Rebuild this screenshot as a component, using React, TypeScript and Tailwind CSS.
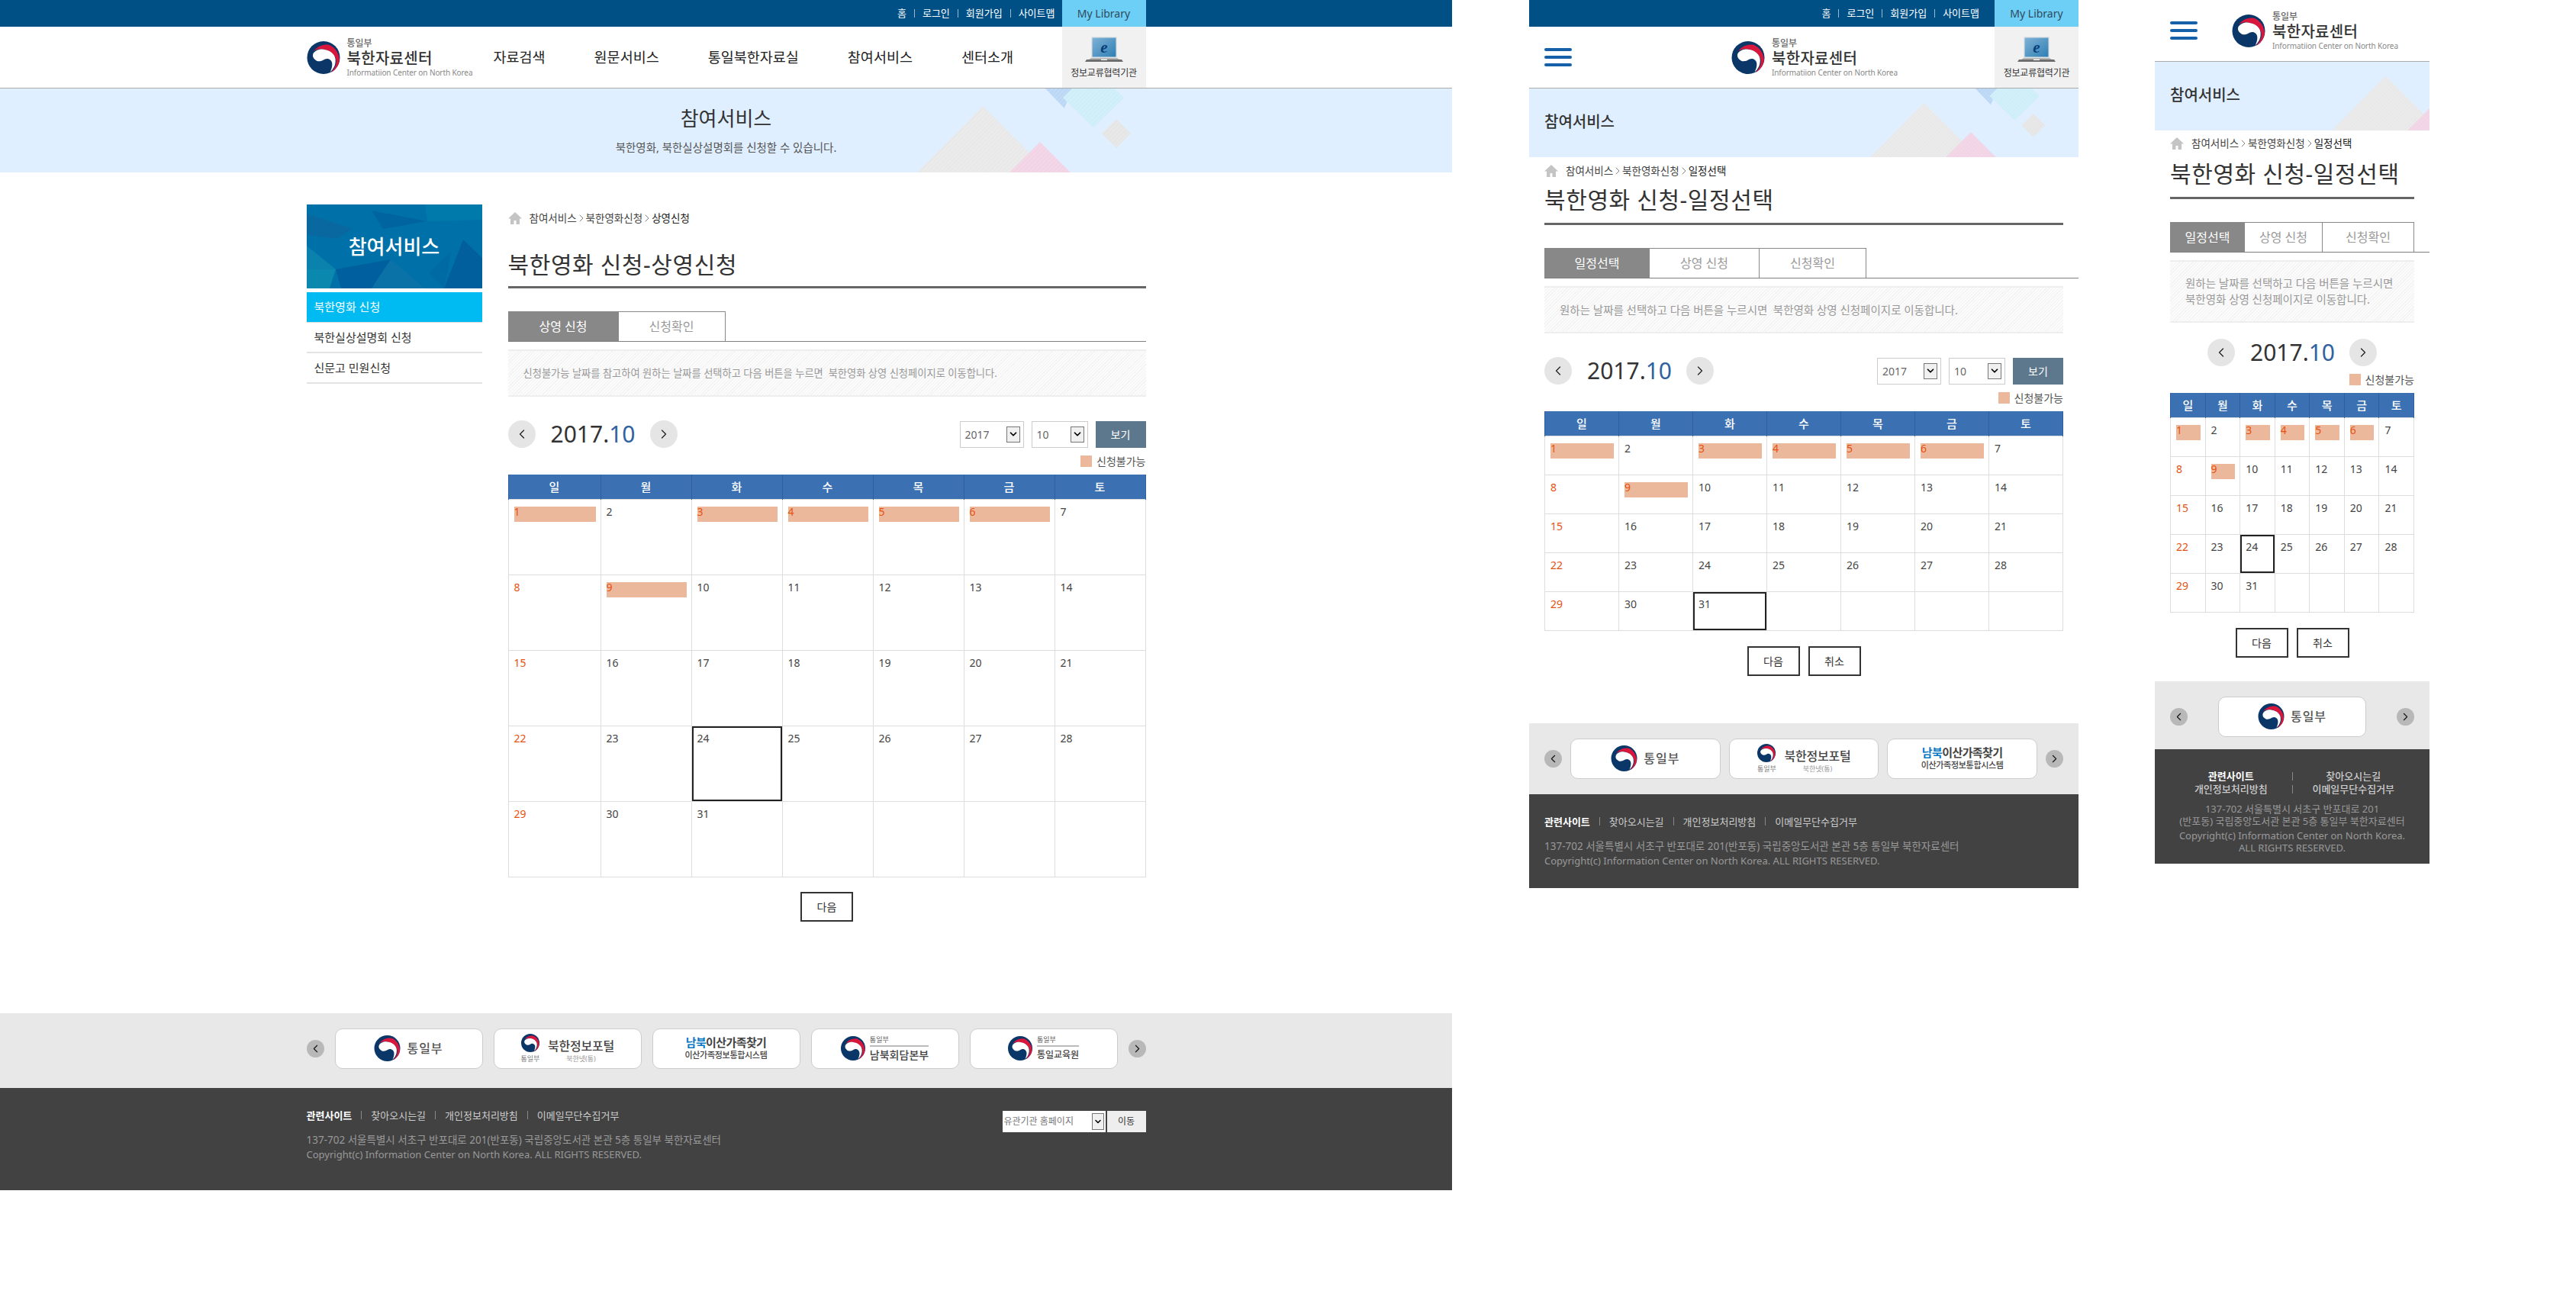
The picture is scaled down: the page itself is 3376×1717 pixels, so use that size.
import React from "react";
import { ChevronDown, ChevronLeft, ChevronRight } from "lucide-react";

const Taegeuk: React.FC<{ className?: string }> = ({ className }) => (
  <svg viewBox="0 0 44 44" className={className}>
    <circle cx="22" cy="22" r="22" fill="#0b3768" />
    <path d="M8 15C12 7 22 3 30 5C40 9 46 22 42 31C40 36 36 40 32 42C38 36 41 28 38 22C34 13 22 9 14 11C11 12 9 13 8 15Z" fill="#d9173d" />
    <path d="M8 17C10 13 16 10 22 11C32 12 39 19 38 27C38 32 35 38 31 41C34 35 35 28 31 25C27 22 24 24 22 25C19 27 14 28 11 25C8 23 7 20 8 17Z" fill="#fff" />
  </svg>
);

const Logo: React.FC = () => (
  <div className="flex items-center gap-[9px] shrink-0">
    <Taegeuk className="w-[44px] h-[43px]" />
    <div className="flex flex-col w-[137px] mt-[2px]">
      <span className="text-[12px] leading-[14px] text-[#666] font-medium">통일부</span>
      <span className="text-[20px] leading-[25px] text-[#333] font-medium tracking-[0.3px]">북한자료센터</span>
      <span className="text-[10px] leading-[13px] text-[#888] whitespace-nowrap tracking-[-0.1px]">Informatiion Center on North Korea</span>
    </div>
  </div>
);

const TopBar: React.FC<{ gapClass: string }> = ({ gapClass }) => (
  <div className="h-[35px] flex justify-end items-center text-white text-[13px]">
    {["홈", "로그인", "회원가입", "사이트맵"].map((t, i) => (
      <React.Fragment key={t}>
        {i > 0 && <span className="w-px h-[11px] bg-[#9db9cf] mx-[10px]" />}
        <span>{t}</span>
      </React.Fragment>
    ))}
    <span className={`${gapClass} w-[110px] h-[35px] flex items-center justify-center bg-[#6dcff6] text-[#2f4a5c] text-[14px]`}>My Library</span>
  </div>
);

const LaptopBox: React.FC = () => (
  <div className="w-[110px] h-[80px] bg-[#f1f1f1] flex flex-col items-center shrink-0">
    <svg viewBox="0 0 50 36" className="w-[50px] h-[36px] mt-[13px]">
      <defs>
        <linearGradient id="lapScreen" x1="0" y1="0" x2="1" y2="1">
          <stop offset="0" stopColor="#7fb2d6" />
          <stop offset="1" stopColor="#2f7fb4" />
        </linearGradient>
      </defs>
      <rect x="8" y="0" width="34" height="28" rx="1" fill="#dfe3e6" />
      <rect x="9.5" y="1.5" width="31" height="25" fill="url(#lapScreen)" />
      <path d="M2 30H48L50 33H0Z" fill="#6e6e6e" />
      <path d="M8 28H42L45 30H5Z" fill="#b5b5b5" />
      <rect x="21" y="29.5" width="8" height="1.5" fill="#eee" />
      <text x="25" y="21" textAnchor="middle" fontSize="21" fontStyle="italic" fontWeight="700" fill="#0b3f78" fontFamily="'Liberation Serif', serif">e</text>
    </svg>
    <span className="text-[12px] leading-[14px] mt-[5px] text-[#333] whitespace-nowrap tracking-[-0.2px]">정보교류협력기관</span>
  </div>
);

const Hamburger: React.FC = () => (
  <div className="w-[36px] flex flex-col gap-[6px] shrink-0">
    <span className="h-[4px] rounded-full bg-[#1560a8]" />
    <span className="h-[4px] rounded-full bg-[#1560a8]" />
    <span className="h-[4px] rounded-full bg-[#1560a8]" />
  </div>
);

const BandShapes: React.FC<{ className: string }> = ({ className }) => (
  <svg viewBox="0 0 360 110" className={`absolute top-0 ${className}`}>
    <defs>
      <pattern id="bandHatch" width="4" height="4" patternUnits="userSpaceOnUse" patternTransform="rotate(45)">
        <rect width="2" height="4" fill="#fff" fillOpacity="0.12" />
      </pattern>
    </defs>
    {[
      { d: "M108 23L195 110H22Z", f: "#e8e8e8" },
      { d: "M183 70L223 110H143Z", f: "#f1d3e5" },
      { d: "M190 0H225L215 26Z", f: "#b9d6f5" },
      { d: "M213 12L225 0H280L293 12L253 51Z", f: "#cdeef8" },
      { d: "M283 40L302 59L283 78L264 59Z", f: "#e5e5e5" },
    ].map((s) => (
      <g key={s.d}>
        <path d={s.d} fill={s.f} />
        <path d={s.d} fill="url(#bandHatch)" />
      </g>
    ))}
  </svg>
);

const Crumbs: React.FC<{ last: string; className: string }> = ({ last, className }) => (
  <div className={`flex items-center h-[20px] text-[13.5px] text-[#444] ${className}`}>
    <svg viewBox="0 0 18 16" className="w-[18px] h-[16px] mr-[10px] shrink-0">
      <path d="M9 0L18 8.5H15V16H10.5V11H7.5V16H3V8.5H0Z" fill="#c4c4c4" />
    </svg>
    <span>참여서비스</span>
    <ChevronRight size={16} strokeWidth={1} className="mx-[-2px]" />
    <span>북한영화신청</span>
    <ChevronRight size={16} strokeWidth={1} className="mx-[-2px]" />
    <span className="text-[#222]">{last}</span>
  </div>
);

const FakeSelect: React.FC<{ value: string; className: string }> = ({ value, className }) => (
  <div className={`h-[35px] border border-[#ccc] bg-white flex items-center justify-between pl-[6px] pr-[4px] text-[14px] text-[#666] ${className}`}>
    <span>{value}</span>
    <span className="w-[18px] h-[21px] bg-[#f0f0f0] border border-[#777] flex items-center justify-center">
      <ChevronDown size={14} strokeWidth={3} className="text-black" />
    </span>
  </div>
);

const blocked = [1, 3, 4, 5, 6, 9];
const weeks: (number | null)[][] = [
  [1, 2, 3, 4, 5, 6, 7],
  [8, 9, 10, 11, 12, 13, 14],
  [15, 16, 17, 18, 19, 20, 21],
  [22, 23, 24, 25, 26, 27, 28],
  [29, 30, 31, null, null, null, null],
];

const Calendar: React.FC<{ selected: number; rowClass: string; firstClass?: string }> = ({ selected, rowClass, firstClass }) => (
  <table className="w-full table-fixed mt-[10px]">
    <thead>
      <tr className="h-[32px] bg-[#3b70b2] text-white text-[15px]">
        {["일", "월", "화", "수", "목", "금", "토"].map((d, i) => (
          <th key={d} className={`font-medium border-x border-[#2f5f9e] ${i === 0 ? firstClass ?? "" : ""}`}>{d}</th>
        ))}
      </tr>
    </thead>
    <tbody>
      {weeks.map((w, i) => (
        <tr key={i} className={rowClass}>
          {w.map((d, j) => (
            <td
              key={j}
              className={`align-top border border-[#ddd] text-[14px] ${d === selected ? "shadow-[inset_0_0_0_2px_#222]" : ""}`}
            >
              {d !== null && (
                <div
                  className={`mt-[9px] ml-[7px] mr-[6px] h-[20px] leading-[14px] ${blocked.includes(d) ? "bg-[#ecb89b]" : ""} ${j === 0 || blocked.includes(d) ? "text-[#e8500f]" : "text-[#444]"}`}
                >
                  {d}
                </div>
              )}
            </td>
          ))}
        </tr>
      ))}
    </tbody>
  </table>
);

const OutlineBtn: React.FC<{ label: string }> = ({ label }) => (
  <span className="w-[69px] h-[39px] border-2 border-[#333] bg-white flex items-center justify-center text-[14px] text-[#333]">{label}</span>
);

const Tabs: React.FC<{ items: { label: string; w: string }[]; className: string }> = ({ items, className }) => (
  <div className={`flex border-b border-[#808080] ${className}`}>
    {items.map((t, i) => (
      <div
        key={t.label}
        className={`${t.w} h-full flex items-center justify-center text-[16px] ${i === 0 ? "bg-[#888] text-white" : "border-t border-r border-[#888] text-[#999]"}`}
      >
        {t.label}
      </div>
    ))}
  </div>
);

const Notice: React.FC<{ text: string; className: string }> = ({ text, className }) => (
  <div className={`mt-[10px] flex items-center px-[20px] border-y-2 border-[#eee] leading-[21px] text-[#999] bg-[repeating-linear-gradient(135deg,#f3f3f3_0px,#f3f3f3_1px,#fbfbfb_1px,#fbfbfb_3px)] ${className}`}>
    <p className="whitespace-pre-wrap break-keep">{text}</p>
  </div>
);

const YearNav: React.FC = () => (
  <div className="flex items-center gap-[20px]">
    <span className="w-[36px] h-[36px] rounded-full bg-[#e5e5e5] flex items-center justify-center">
      <ChevronLeft size={20} strokeWidth={1.5} className="text-[#222]" />
    </span>
    <span className="text-[30px] leading-[36px] text-[#333] w-[110px] whitespace-nowrap">
      2017.<span className="text-[#2f629f]">10</span>
    </span>
    <span className="w-[36px] h-[36px] rounded-full bg-[#e5e5e5] flex items-center justify-center">
      <ChevronRight size={20} strokeWidth={1.5} className="text-[#222]" />
    </span>
  </div>
);

const YearControls: React.FC = () => (
  <div className="flex items-center justify-between h-[36px] mt-[31px]">
    <YearNav />
    <div className="flex items-center gap-[10px]">
      <FakeSelect value="2017" className="w-[84px]" />
      <FakeSelect value="10" className="w-[74px]" />
      <span className="w-[66px] h-[35px] bg-[#5d778d] text-white text-[14px] flex items-center justify-center">보기</span>
    </div>
  </div>
);

const Legend: React.FC = () => (
  <div className="flex items-center justify-end gap-[6px] h-[15px] mt-[10px] text-[14px] text-[#555]">
    <span className="w-[15px] h-[15px] bg-[#ecb89b]" />
    <span>신청불가능</span>
  </div>
);

const CardLogo: React.FC<{ kind: number }> = ({ kind }) => {
  if (kind === 0)
    return (
      <div className="flex items-center gap-[8px]">
        <Taegeuk className="w-[35px] h-[34px]" />
        <span className="text-[16px] font-medium text-[#555] tracking-[1px]">통일부</span>
      </div>
    );
  if (kind === 1)
    return (
      <div className="flex items-start gap-[10px]">
        <div className="flex flex-col items-center">
          <Taegeuk className="w-[26px] h-[24px]" />
          <span className="text-[9px] leading-[12px] mt-[3px] text-[#777]">통일부</span>
        </div>
        <div className="flex flex-col items-center">
          <span className="text-[16px] leading-[22px] mt-[5px] font-medium text-[#444] tracking-[-0.2px] whitespace-nowrap">북한정보포털</span>
          <span className="text-[9px] leading-[12px] text-[#999]">북한넷(통)</span>
        </div>
      </div>
    );
  if (kind === 2)
    return (
      <div className="flex flex-col items-center">
        <span className="text-[15px] leading-[18px] font-bold text-[#444] whitespace-nowrap tracking-[-0.6px]">
          <span className="text-[#0a78c2]">남북</span>이산가족찾기
        </span>
        <span className="text-[11px] leading-[16px] font-medium text-[#444] whitespace-nowrap tracking-[-0.3px]">이산가족정보통합시스템</span>
      </div>
    );
  return (
    <div className="flex items-center gap-[6px]">
      <Taegeuk className="w-[32px] h-[34px]" />
      <div className="flex flex-col">
        <span className="text-[9px] leading-[11px] text-[#555]">통일부</span>
        <span className="h-[2px] bg-[#bbb] mt-[2px] mb-[2px]" />
        <span className={`font-medium text-[#444] whitespace-nowrap leading-[18px] ${kind === 3 ? "text-[14px]" : "text-[12px]"}`}>
          {kind === 3 ? "남북회담본부" : "통일교육원"}
        </span>
      </div>
    </div>
  );
};

const ArrowDot: React.FC<{ dir: "l" | "r" }> = ({ dir }) => (
  <span className="w-[23px] h-[23px] rounded-full bg-[#b8b8b8] flex items-center justify-center shrink-0">
    {dir === "l" ? <ChevronLeft size={17} strokeWidth={1.5} className="text-[#111]" /> : <ChevronRight size={17} strokeWidth={1.5} className="text-[#111]" />}
  </span>
);

const LogoBand: React.FC<{ kinds: number[]; className: string; innerClass: string; cardClass: string }> = ({ kinds, className, innerClass, cardClass }) => (
  <div className={`bg-[#e8e8e8] pt-[20px] ${className}`}>
    <div className={`flex items-center h-[53px] ${innerClass}`}>
      <ArrowDot dir="l" />
      {kinds.map((k) => (
        <div key={k} className={`h-[53px] bg-white border border-[#ccc] rounded-[10px] flex items-center justify-center ${cardClass}`}>
          <CardLogo kind={k} />
        </div>
      ))}
      <ArrowDot dir="r" />
    </div>
  </div>
);

const FootLinks: React.FC = () => (
  <div className="flex items-center text-[13px] leading-[18px] text-[#ccc]">
    <span className="text-white font-bold">관련사이트</span>
    {["찾아오시는길", "개인정보처리방침", "이메일무단수집거부"].map((t) => (
      <React.Fragment key={t}>
        <span className="w-px h-[11px] bg-[#888] mx-[12px]" />
        <span>{t}</span>
      </React.Fragment>
    ))}
  </div>
);

const Address: React.FC = () => (
  <div className="mt-[14px] leading-[19px] text-[#999]">
    <p className="text-[13.5px]">137-702 서울특별시 서초구 반포대로 201(반포동) 국립중앙도서관 본관 5층 통일부 북한자료센터</p>
    <p className="text-[13px]">Copyright(c) Information Center on North Korea. ALL RIGHTS RESERVED.</p>
  </div>
);

const DesktopPage: React.FC = () => (
  <div className="w-[1903px] shrink-0">
    <div className="bg-[#005086]">
      <div className="w-[1100px] mx-auto">
        <TopBar gapClass="ml-[9px]" />
      </div>
    </div>
    <div className="h-[81px] border-b border-[#aaa]">
      <div className="w-[1100px] mx-auto flex items-center h-[80px]">
        <Logo />
        <nav className="ml-[55px] flex gap-[64px] text-[18.5px] text-[#222] whitespace-nowrap">
          {["자료검색", "원문서비스", "통일북한자료실", "참여서비스", "센터소개"].map((t) => (
            <span key={t}>{t}</span>
          ))}
        </nav>
        <div className="ml-auto">
          <LaptopBox />
        </div>
      </div>
    </div>
    <div className="relative h-[110px] bg-[#dfefff] overflow-hidden flex flex-col items-center">
      <BandShapes className="left-[1180px] w-[360px] h-[110px]" />
      <h2 className="relative mt-[21px] text-[26px] leading-[36px] text-[#333]">참여서비스</h2>
      <p className="relative mt-[10px] text-[14.5px] leading-[20px] text-[#555]">북한영화, 북한실상설명회를 신청할 수 있습니다.</p>
    </div>

    <div className="w-[1100px] mx-auto flex gap-[34px] mt-[42px]">
      <aside className="w-[230px] shrink-0">
        <div className="relative h-[110px] bg-[#0071a8] overflow-hidden flex items-center justify-center">
          <svg viewBox="0 0 230 110" className="absolute inset-0 w-full h-full">
            <path d="M0 12L60 32L40 45L0 40Z" fill="#0a68a0" />
            <path d="M85 8L158 22L100 32Z" fill="#0064a0" />
            <path d="M155 0H230V20L158 22Z" fill="#0079ab" />
            <path d="M0 54L38 85L0 90Z" fill="#0a82ad" />
            <path d="M38 85L110 72L85 110H45Z" fill="#005f9e" />
            <path d="M0 85L38 85L30 110H0Z" fill="#0a88ad" />
            <path d="M110 72L155 110H85Z" fill="#0a72a6" />
            <path d="M205 46L230 70V110H180Z" fill="#005f9c" />
            <path d="M205 46L190 60L180 110L160 90Z" fill="#006aa3" />
          </svg>
          <span className="relative text-[26px] text-white font-medium">참여서비스</span>
        </div>
        <ul className="mt-[5px]">
          <li className="h-[40px] flex items-center pl-[10px] bg-[#00bbf2] border-b border-[#ddd] text-[15px] text-white">북한영화 신청</li>
          <li className="h-[40px] flex items-center pl-[10px] border-b-2 border-[#e3e3e3] text-[15px] text-[#333]">북한실상설명회 신청</li>
          <li className="h-[40px] flex items-center pl-[10px] border-b-2 border-[#e3e3e3] text-[15px] text-[#333]">신문고 민원신청</li>
        </ul>
      </aside>
      <main className="flex-1 min-w-0">
        <Crumbs last="상영신청" className="mt-[8px]" />
        <h1 className="mt-[31px] h-[51px] border-b-[3px] border-[#666] text-[30px] leading-[40px] text-[#333] tracking-[0.6px]">북한영화 신청-상영신청</h1>
        <Tabs
          className="mt-[30px] h-[40px]"
          items={[
            { label: "상영 신청", w: "w-[145px]" },
            { label: "신청확인", w: "w-[140px]" },
          ]}
        />
        <Notice className="h-[62px] text-[13.25px]" text="신청불가능 날짜를 참고하여 원하는 날짜를 선택하고 다음 버튼을 누르면  북한영화 상영 신청페이지로 이동합니다." />
        <YearControls />
        <Legend />
        <Calendar selected={24} rowClass="h-[99px]" firstClass="w-[121px]" />
        <div className="flex justify-center mt-[19px]">
          <OutlineBtn label="다음" />
        </div>
      </main>
    </div>

    <LogoBand kinds={[0, 1, 2, 3, 4]} className="h-[98px] mt-[120px]" innerClass="w-[1100px] mx-auto gap-[14px]" cardClass="flex-1" />
    <div className="h-[134px] bg-[#424242] pt-[27px]">
      <div className="w-[1100px] mx-auto flex justify-between items-start">
        <div>
          <FootLinks />
          <Address />
        </div>
        <div className="flex gap-[2px] mt-[3px]">
          <div className="w-[135px] h-[28px] bg-white flex items-center justify-between pl-[2px] pr-[2px] text-[12px] text-[#777]">
            <span className="whitespace-nowrap">유관기관 홈페이지</span>
            <span className="w-[16px] h-[22px] bg-[#f0f0f0] border border-[#777] flex items-center justify-center shrink-0">
              <ChevronDown size={12} strokeWidth={3} className="text-black" />
            </span>
          </div>
          <span className="w-[51px] h-[28px] bg-[#eee] text-[12px] text-[#333] flex items-center justify-center">이동</span>
        </div>
      </div>
    </div>
  </div>
);

const TabletPage: React.FC = () => (
  <div className="w-[720px] shrink-0 ml-[101px]">
    <div className="bg-[#005086]">
      <TopBar gapClass="ml-[20px]" />
    </div>
    <div className="h-[81px] border-b border-[#aaa] flex items-center pl-[20px]">
      <Hamburger />
      <div className="ml-[209px]">
        <Logo />
      </div>
      <div className="ml-auto">
        <LaptopBox />
      </div>
    </div>
    <div className="relative h-[90px] bg-[#dfefff] overflow-hidden flex items-center pl-[20px]">
      <BandShapes className="left-[429px] w-[295px] h-[90px]" />
      <h2 className="relative -mt-[2px] text-[20px] text-[#333] font-medium">참여서비스</h2>
    </div>
    <div className="px-[20px]">
      <Crumbs last="일정선택" className="mt-[8px]" />
      <h1 className="mt-[8px] h-[53px] border-b-[3px] border-[#666] text-[30px] leading-[40px] text-[#333] tracking-[0.6px]">북한영화 신청-일정선택</h1>
      <Tabs
        className="mt-[30px] h-[40px] -mr-[20px]"
        items={[
          { label: "일정선택", w: "w-[138px]" },
          { label: "상영 신청", w: "w-[144px]" },
          { label: "신청확인", w: "w-[140px]" },
        ]}
      />
      <Notice className="h-[62px] text-[14.5px]" text="원하는 날짜를 선택하고 다음 버튼을 누르시면  북한영화 상영 신청페이지로 이동합니다." />
      <YearControls />
      <Legend />
      <Calendar selected={31} rowClass="h-[51px]" />
      <div className="flex justify-center gap-[11px] mt-[20px]">
        <OutlineBtn label="다음" />
        <OutlineBtn label="취소" />
      </div>
    </div>
    <LogoBand kinds={[0, 1, 2]} className="h-[93px] mt-[62px]" innerClass="mx-[20px] gap-[11px]" cardClass="flex-1" />
    <div className="h-[123px] bg-[#424242] pt-[27px] px-[20px]">
      <FootLinks />
      <Address />
    </div>
  </div>
);

const MobilePage: React.FC = () => (
  <div className="w-[360px] shrink-0 ml-[100px]">
    <div className="h-[81px] border-b border-[#aaa] flex items-center pl-[20px]">
      <Hamburger />
      <div className="ml-[45px]">
        <Logo />
      </div>
    </div>
    <div className="relative h-[90px] bg-[#dfefff] overflow-hidden flex items-center pl-[20px]">
      <BandShapes className="left-[214px] w-[295px] h-[90px]" />
      <h2 className="relative -mt-[2px] text-[20px] text-[#333] font-medium">참여서비스</h2>
    </div>
    <div className="px-[20px]">
      <Crumbs last="일정선택" className="mt-[7px]" />
      <h1 className="mt-[8px] h-[55px] border-b-[3px] border-[#666] text-[30px] leading-[44px] text-[#333] tracking-[0.6px] whitespace-nowrap">북한영화 신청-일정선택</h1>
      <Tabs
        className="mt-[30px] h-[40px] -mr-[20px]"
        items={[
          { label: "일정선택", w: "w-[98px]" },
          { label: "상영 신청", w: "w-[102px]" },
          { label: "신청확인", w: "w-[120px]" },
        ]}
      />
      <Notice className="h-[82px] text-[14.5px]" text="원하는 날짜를 선택하고 다음 버튼을 누르시면 북한영화 상영 신청페이지로 이동합니다." />
      <div className="flex justify-center mt-[21px]">
        <YearNav />
      </div>
      <Legend />
      <Calendar selected={24} rowClass="h-[51px]" />
      <div className="flex justify-center gap-[11px] mt-[20px]">
        <OutlineBtn label="다음" />
        <OutlineBtn label="취소" />
      </div>
    </div>
    <LogoBand kinds={[0]} className="h-[89px] mt-[31px]" innerClass="mx-[20px] justify-between" cardClass="w-[194px]" />
    <div className="h-[150px] bg-[#424242] pt-[27px] px-[20px] text-center text-[13px]">
      <div className="grid grid-cols-[1fr_1px_1fr] items-center leading-[17px] text-[#ccc] font-medium">
        <span className="text-white font-bold">관련사이트</span>
        <span className="h-[11px] bg-[#888]" />
        <span>찾아오시는길</span>
        <span>개인정보처리방침</span>
        <span className="h-[11px] bg-[#888]" />
        <span>이메일무단수집거부</span>
      </div>
      <div className="mt-[9px] leading-[16px] text-[#999] whitespace-nowrap">
        <p>137-702 서울특별시 서초구 반포대로 201</p>
        <p>(반포동) 국립중앙도서관 본관 5층 통일부 북한자료센터</p>
        <p className="mt-[3px]">Copyright(c) Information Center on North Korea.</p>
        <p>ALL RIGHTS RESERVED.</p>
      </div>
    </div>
  </div>
);

export default function App() {
  return (
    <div className="w-[3376px] h-[1717px] bg-white overflow-hidden flex items-start font-['Noto_Sans','Noto_Sans_CJK_KR',sans-serif]">
      <DesktopPage />
      <TabletPage />
      <MobilePage />
    </div>
  );
}
